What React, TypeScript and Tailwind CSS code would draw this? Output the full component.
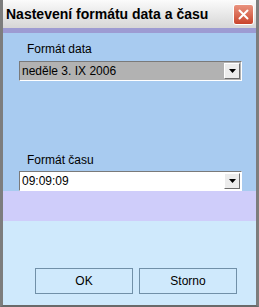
import React from "react";

function Arrow() {
  return (
    <div className="flex h-[16px] w-[16px] items-center justify-center border border-t-white border-l-white border-r-[#6d6d6d] border-b-[#6d6d6d] bg-[#ececec]">
      <svg width="7" height="4" viewBox="0 0 7 4">
        <path d="M0 0H7L3.5 4Z" fill="#000" />
      </svg>
    </div>
  );
}

function Select({ value, bg }: { value: string; bg: string }) {
  return (
    <div
      className={`flex h-[20px] w-[223px] items-center justify-between border border-t-[#7a7a7a] border-l-[#7a7a7a] border-r-white border-b-white pl-[2px] pr-[1px] ${bg}`}
    >
      <span className="text-[12px] leading-none text-black">{value}</span>
      <Arrow />
    </div>
  );
}

export default function App() {
  return (
    <div
      className="flex h-[307px] w-[259px] flex-col border-x-[3px] border-b-[2px] border-x-[#7d7d7d] border-b-[#6a6a6a] bg-[#cfe9fc]"
      style={{ fontFamily: "'Liberation Sans', sans-serif" }}
    >
      <div className="flex h-[28px] shrink-0 items-center justify-between bg-gradient-to-b from-[#fbfbfb] to-[#d6d6d6] pl-[3px] pr-[2px]">
        <span className="text-[14px] font-bold text-black">
          Nastevení formátu data a času
        </span>
        <div className="flex h-[21px] w-[21px] items-center justify-center rounded-[3px] border border-white bg-gradient-to-b from-[#e9927e] to-[#c9432b]">
          <svg width="11" height="11" viewBox="0 0 11 11">
            <path d="M1.5 1.5L9.5 9.5M9.5 1.5L1.5 9.5" stroke="#fff" strokeWidth="2" strokeLinecap="round" />
          </svg>
        </div>
      </div>
      <div className="h-[5px] shrink-0 bg-[#9d9bd2]" />
      <div className="flex h-[158px] shrink-0 flex-col bg-[#a8cbf0] pl-[16px]">
        <div className="mt-[9px] pl-[8px] text-[12px] leading-[14px] text-black">Formát data</div>
        <div className="mt-[5px]">
          <Select value="neděle 3. IX 2006" bg="bg-[#b2b2b2]" />
        </div>
        <div className="mt-[72px] pl-[8px] text-[12px] leading-[14px] text-black">Formát času</div>
      </div>
      <div className="relative h-[30px] shrink-0 bg-[#cfcdfa]">
        <div className="absolute left-[16px] top-[-20px]">
          <Select value="09:09:09" bg="bg-white" />
        </div>
      </div>
      <div className="flex flex-1 items-end gap-[6px] pb-[11px] pl-[32px]">
        <button className="h-[26px] w-[98px] border border-[#7190a8] bg-[#cfe9fc] text-[12px] text-black">OK</button>
        <button className="h-[26px] w-[98px] border border-[#7190a8] bg-[#cfe9fc] text-[12px] text-black">Storno</button>
      </div>
    </div>
  );
}
